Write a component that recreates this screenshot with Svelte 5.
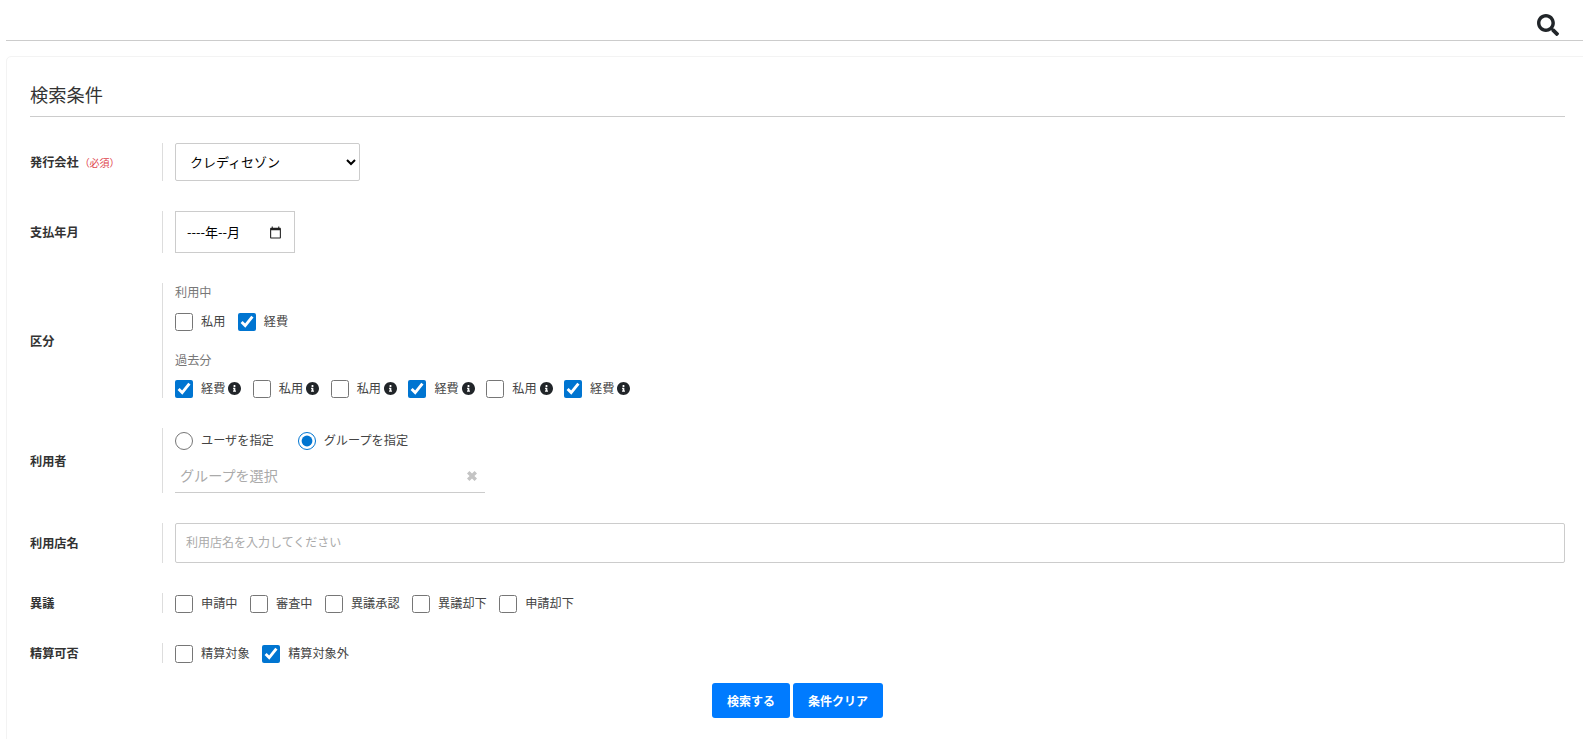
<script lang="ts">
  interface Opt {
    label: string;
    checked?: boolean;
    info?: boolean;
  }

  const current: Opt[] = [{ label: '私用' }, { label: '経費', checked: true }];
  const past: Opt[] = [
    { label: '経費', checked: true, info: true },
    { label: '私用', info: true },
    { label: '私用', info: true },
    { label: '経費', checked: true, info: true },
    { label: '私用', info: true },
    { label: '経費', checked: true, info: true }
  ];
  const objection: Opt[] = [
    { label: '申請中' },
    { label: '審査中' },
    { label: '異議承認' },
    { label: '異議却下' },
    { label: '申請却下' }
  ];
  const settle: Opt[] = [{ label: '精算対象' }, { label: '精算対象外', checked: true }];

  let userMode = $state('group');
</script>

{#snippet checks(items: Opt[])}
  <div class="checks">
    {#each items as item}
      <label class="check">
        <input type="checkbox" checked={item.checked} />
        <span>{item.label}</span>
        {#if item.info}
          <svg class="info" viewBox="8 8 496 496" aria-hidden="true">
            <path d="M256 8C119 8 8 119 8 256s111 248 248 248 248-111 248-248S393 8 256 8zm0 110c23 0 42 19 42 42s-19 42-42 42-42-19-42-42 19-42 42-42zm56 254c0 7-5 12-12 12h-88c-7 0-12-5-12-12v-24c0-7 5-12 12-12h12v-64h-12c-7 0-12-5-12-12v-24c0-7 5-12 12-12h64c7 0 12 5 12 12v100h12c7 0 12 5 12 12v24z" />
          </svg>
        {/if}
      </label>
    {/each}
  </div>
{/snippet}

<header class="topbar">
  <svg class="search-icon" viewBox="0 0 512 512" aria-hidden="true">
    <path d="M505 442.700L405.300 343c-4.500-4.500-10.600-7-17-7H372c27.600-35.300 44-79.700 44-128C416 93.100 322.900 0 208 0S0 93.100 0 208s93.100 208 208 208c48.300 0 92.700-16.400 128-44v16.300c0 6.400 2.500 12.500 7 17l99.700 99.700c9.400 9.400 24.600 9.400 33.900 0l28.300-28.300c9.400-9.400 9.400-24.600.1-34zM208 336c-70.700 0-128-57.200-128-128 0-70.700 57.200-128 128-128 70.700 0 128 57.200 128 128 0 70.700-57.200 128-128 128z" />
  </svg>
</header>

<section class="card">
  <h2>検索条件</h2>

  <div class="row">
    <div class="name">発行会社<small>（必須）</small></div>
    <div class="value">
      <select class="company">
        <option>クレディセゾン</option>
      </select>
    </div>
  </div>

  <div class="row">
    <div class="name">支払年月</div>
    <div class="value">
      <div class="month">
        <span>----年--月</span>
        <svg viewBox="0 0 24 24" aria-hidden="true">
          <path d="M20 3h-1V1h-2v2H7V1H5v2H4c-1.100 0-2 .9-2 2v16c0 1.100.9 2 2 2h16c1.100 0 2-.9 2-2V5c0-1.100-.9-2-2-2zm0 18H4V8h16v13z" />
        </svg>
      </div>
    </div>
  </div>

  <div class="row">
    <div class="name">区分</div>
    <div class="value">
      <div class="sub first">利用中</div>
      {@render checks(current)}
      <div class="sub second">過去分</div>
      {@render checks(past)}
    </div>
  </div>

  <div class="row">
    <div class="name">利用者</div>
    <div class="value">
      <div class="radios">
        <label class="radio">
          <input type="radio" name="user" value="user" bind:group={userMode} />
          <span>ユーザを指定</span>
        </label>
        <label class="radio">
          <input type="radio" name="user" value="group" bind:group={userMode} />
          <span>グループを指定</span>
        </label>
      </div>
      <div class="group-select">
        <span>グループを選択</span>
        <svg viewBox="1.500 1.500 7 7" aria-hidden="true">
          <path d="M1.500 3.200 3.200 1.500 5 3.300l1.800-1.800 1.700 1.700L6.700 5l1.800 1.800-1.700 1.700L5 6.700 3.200 8.500 1.500 6.800 3.300 5z" />
        </svg>
      </div>
    </div>
  </div>

  <div class="row">
    <div class="name">利用店名</div>
    <div class="value">
      <input class="shop" type="text" placeholder="利用店名を入力してください" />
    </div>
  </div>

  <div class="row">
    <div class="name">異議</div>
    <div class="value tall">{@render checks(objection)}</div>
  </div>

  <div class="row">
    <div class="name">精算可否</div>
    <div class="value tall">{@render checks(settle)}</div>
  </div>

  <div class="actions">
    <button type="button">検索する</button>
    <button type="button">条件クリア</button>
  </div>
</section>

<style>
  :global(body) {
    overflow: hidden;
    background: #fff;
    color: #212529;
    font-family: "Noto Sans CJK JP", "Noto Sans", sans-serif;
    font-size: 12.160px;
  }

  .topbar {
    display: flex;
    justify-content: flex-end;
    align-items: flex-end;
    height: 41px;
    margin-left: 6px;
    padding: 0 24px 4px 0;
    box-sizing: border-box;
    border-bottom: 1px solid #ccc;
  }

  .search-icon {
    width: 22px;
    height: 22px;
    fill: #212529;
  }

  .card {
    width: 1583px;
    height: 700px;
    box-sizing: border-box;
    margin: 15px 0 0 6px;
    padding: 0 23px;
    border: 1px solid #f3f3f3;
    border-radius: 5px;
  }

  h2 {
    height: 59px;
    line-height: 74px;
    margin: 0 0 26px;
    border-bottom: 1px solid #ccc;
    font-size: 18.240px;
    font-weight: 400;
    color: #333;
    box-sizing: content-box;
  }

  .row {
    display: grid;
    grid-template-columns: 132px 1fr;
    align-items: center;
    margin-bottom: 30px;
  }

  .row:nth-last-child(2) {
    margin-bottom: 20px;
  }

  .name {
    font-weight: 700;
    color: #333;
  }

  small {
    font-size: 10px;
    font-weight: 400;
    color: #e0444c;
    margin-left: 1px;
  }

  .value {
    border-left: 1px solid #ddd;
    padding-left: 12px;
    min-width: 0;
  }

  .value.tall {
    padding-top: 2px;
  }

  select.company {
    display: block;
    width: 185px;
    height: 38px;
    padding: 0 10px 2px;
    border: 1px solid #ccc;
    border-radius: 2px;
    background: #fff;
    color: #000;
    font: inherit;
    font-size: 13px;
  }

  .month {
    display: flex;
    align-items: center;
    justify-content: space-between;
    width: 120px;
    height: 42px;
    box-sizing: border-box;
    padding: 0 12px 0 11px;
    border: 1px solid #ccc;
    color: #000;
    font-size: 13px;
  }

  .month span {
    margin-bottom: 2px;
  }

  .month svg {
    width: 13px;
    height: 13px;
    fill: #222;
  }

  .sub {
    height: 18px;
    line-height: 18px;
    color: #777;
  }

  .sub.first {
    margin-bottom: 12px;
  }

  .sub.second {
    margin: 20px 0 11px;
  }

  .checks {
    display: flex;
    gap: 12.500px;
  }

  .check,
  .radio {
    display: flex;
    align-items: center;
    gap: 8px;
    color: #444;
    line-height: 16px;
  }

  .check span,
  .radio span {
    position: relative;
    top: -1px;
  }

  input[type="checkbox"],
  input[type="radio"] {
    width: 18px;
    height: 18px;
    margin: 0;
    accent-color: #0075d1;
  }

  .info {
    width: 13px;
    height: 13px;
    margin: -1px -1px 0 -5px;
    fill: #212529;
  }

  .radios {
    display: flex;
    gap: 24px;
    height: 26px;
    margin-bottom: 4px;
  }

  .group-select {
    display: flex;
    align-items: center;
    justify-content: space-between;
    width: 310px;
    height: 35px;
    box-sizing: border-box;
    padding: 0 8px 0 5px;
    border-bottom: 1px solid #ccc;
    color: #aaa;
    font-size: 14.100px;
  }

  .group-select svg {
    width: 10px;
    height: 10px;
    margin-top: 2px;
    fill: #c4c4c4;
  }

  input.shop {
    display: block;
    width: 100%;
    height: 40px;
    box-sizing: border-box;
    padding: 0 10px 3px;
    border: 1px solid #ccc;
    border-radius: 2px;
    font: inherit;
    font-size: 12px;
    outline: none;
  }

  input.shop::placeholder {
    color: #aaa;
  }

  .actions {
    display: flex;
    justify-content: center;
    gap: 3px;
  }

  button {
    height: 35px;
    padding: 0 15px;
    border: none;
    border-radius: 3px;
    background: #007bff;
    color: #fff;
    font: inherit;
    font-size: 12px;
    font-weight: 700;
  }
</style>
